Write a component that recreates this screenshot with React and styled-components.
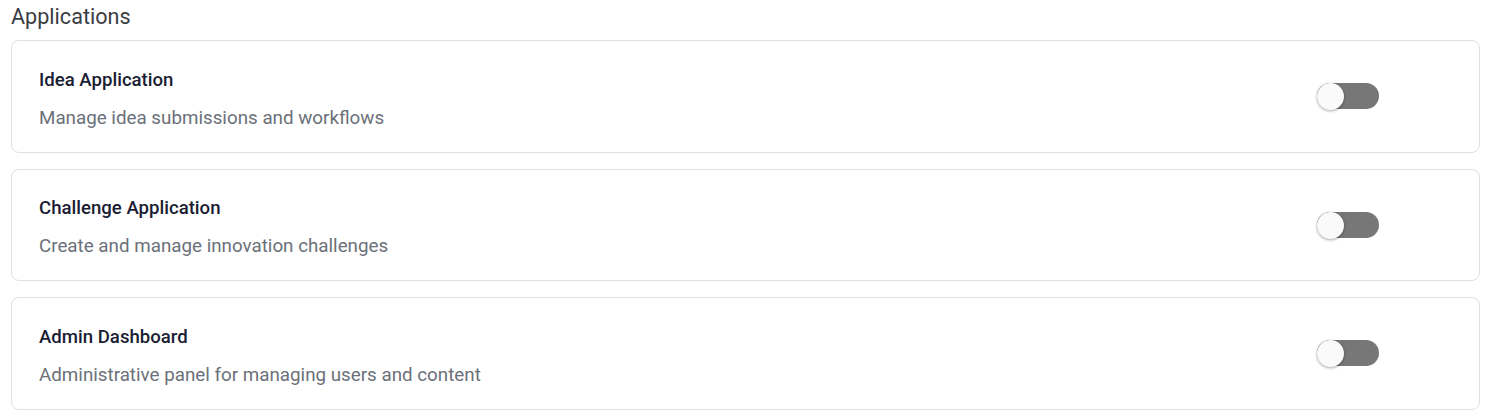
import React, { useState } from 'react';
import styled, { createGlobalStyle } from 'styled-components';

const GlobalStyle = createGlobalStyle`
  body {
    margin: 0;
    background: #ffffff;
    font-family: Roboto, "Liberation Sans", Arial, sans-serif;
  }
`;

const Page = styled.div`
  padding: 3px 8px 10px 11px;
`;

const Heading = styled.h2`
  margin: 0 0 10px 0;
  font-size: 21.6px;
  font-weight: 400;
  line-height: 27px;
  color: #3a3d42;
`;

const List = styled.div`
  display: flex;
  flex-direction: column;
  gap: 16px;
`;

const Card = styled.div`
  display: flex;
  align-items: center;
  justify-content: space-between;
  height: 112.5px;
  box-sizing: border-box;
  padding: 0 100px 0 27px;
  border: 1px solid #e0e0e0;
  border-radius: 8px;
  background: #fff;
`;

const Info = styled.div`
  display: flex;
  flex-direction: column;
  gap: 15px;
  padding-top: 6px;
`;

const Title = styled.div`
  font-size: 18.6px;
  font-weight: 500;
  color: #1a1d33;
  line-height: 23px;
`;

const Desc = styled.div`
  font-size: 18.8px;
  color: #6b7079;
  line-height: 23px;
`;

const Track = styled.button`
  position: relative;
  width: 62px;
  height: 26px;
  padding: 0;
  border: none;
  border-radius: 13px;
  background: ${(p) => (p.on ? '#1976d2' : '#777777')};
  cursor: pointer;
`;

const Thumb = styled.span`
  position: absolute;
  top: 0;
  left: ${(p) => (p.on ? '35px' : '0')};
  width: 27px;
  height: 27px;
  border-radius: 50%;
  background: #fafafa;
  box-shadow: 0 1px 3px rgba(0, 0, 0, 0.35);
`;

const apps = [
  { title: 'Idea Application', desc: 'Manage idea submissions and workflows' },
  { title: 'Challenge Application', desc: 'Create and manage innovation challenges' },
  { title: 'Admin Dashboard', desc: 'Administrative panel for managing users and content' },
];

function Toggle() {
  const [on, setOn] = useState(false);
  return (
    <Track on={on ? 1 : 0} onClick={() => setOn(!on)}>
      <Thumb on={on ? 1 : 0} />
    </Track>
  );
}

export default function App() {
  return (
    <Page>
      <GlobalStyle />
      <Heading>Applications</Heading>
      <List>
        {apps.map((a) => (
          <Card key={a.title}>
            <Info>
              <Title>{a.title}</Title>
              <Desc>{a.desc}</Desc>
            </Info>
            <Toggle />
          </Card>
        ))}
      </List>
    </Page>
  );
}
